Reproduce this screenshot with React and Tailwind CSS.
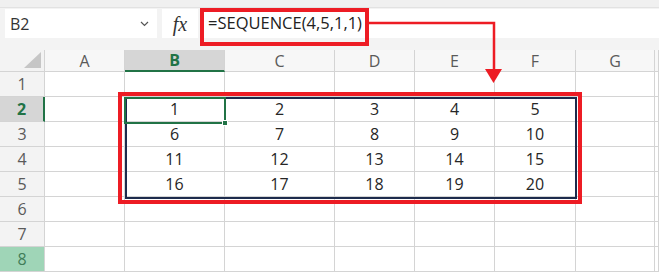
import React from "react";

const cols = [
  { l: "A", w: "w-[80px]" },
  { l: "B", w: "w-[100px]" },
  { l: "C", w: "w-[110px]" },
  { l: "D", w: "w-[80px]" },
  { l: "E", w: "w-[80px]" },
  { l: "F", w: "w-[81px]" },
  { l: "G", w: "w-[79px]" },
  { l: "", w: "w-[4px]" },
];

const data = {
  2: [1, 2, 3, 4, 5],
  3: [6, 7, 8, 9, 10],
  4: [11, 12, 13, 14, 15],
  5: [16, 17, 18, 19, 20],
};

function RowHeader({ n }) {
  if (n === 2)
    return (
      <div className="w-[45px] h-full flex items-center justify-center bg-[#d6d6d6] border-r-2 border-r-[#217346] border-b border-b-[#d4d4d4] font-bold text-[#217346]">
        {n}
      </div>
    );
  if (n === 8)
    return (
      <div className="w-[45px] h-full flex items-center justify-center bg-[#9fd5b7] border-r border-b border-[#d4d4d4] text-[#3f7d58]">
        {n}
      </div>
    );
  return (
    <div className="w-[45px] h-full flex items-center justify-center bg-[#f3f3f3] border-r border-b border-[#d4d4d4] text-[#5a5a5a]">
      {n}
    </div>
  );
}

export default function App() {
  const rows = [1, 2, 3, 4, 5, 6, 7, 8];
  return (
    <div
      className="relative w-[659px] h-[274px] overflow-hidden bg-white text-[16px] text-[#222]"
      style={{ fontFamily: '"Open Sans", "Liberation Sans", sans-serif' }}
    >
      {/* ribbon remnant */}
      <div className="h-[8px] bg-[#f0f0f0] border-b border-[#e2e2e2]" />
      {/* formula bar */}
      <div className="h-[42px] bg-[#f3f3f3] flex items-start pt-[1px]">
        <div className="ml-[5px] w-[152px] h-[29px] bg-white flex items-center justify-between pl-[5px] pr-[8px]">
          <span className="text-[#333]">B2</span>
          <svg width="9" height="6" viewBox="0 0 9 6">
            <path d="M1 1 L4.5 4.5 L8 1" fill="none" stroke="#555" strokeWidth="1.2" />
          </svg>
        </div>
        <div className="ml-[5px] w-[36px] h-[29px] bg-white flex items-center justify-center">
          <span
            className="italic text-[20px] text-[#333]"
            style={{ fontFamily: '"Liberation Serif", serif' }}
          >
            fx
          </span>
        </div>
        <div className="ml-[2px] flex-1 h-[29px] bg-white flex items-center pl-[8px]">
          <span className="text-[16.5px] text-[#222]">=SEQUENCE(4,5,1,1)</span>
        </div>
      </div>
      {/* grid */}
      <div className="flex flex-col">
        <div className="flex h-[22px]">
          <div className="w-[45px] h-full bg-[#f3f3f3] border-r border-b border-[#d4d4d4] flex items-end justify-end pr-[3px] pb-[3px]">
            <svg width="17" height="16" viewBox="0 0 17 16">
              <polygon points="17,0 17,16 0,16" fill="#c6c6c6" />
            </svg>
          </div>
          {cols.map((c) =>
            c.l === "B" ? (
              <div
                key={c.l}
                className={`${c.w} h-full flex items-center justify-center bg-[#d6d6d6] border-b-2 border-b-[#217346] border-r border-r-[#d4d4d4] font-bold text-[#217346]`}
              >
                {c.l}
              </div>
            ) : (
              <div
                key={c.l + "x"}
                className={`${c.w} h-full flex items-center justify-center bg-[#f7f7f7] border-r border-b border-[#d4d4d4] text-[#5a5a5a]`}
              >
                {c.l}
              </div>
            )
          )}
        </div>
        {rows.map((r) => (
          <div key={r} className="flex h-[25px]">
            <RowHeader n={r} />
            {cols.map((c, i) => (
              <div
                key={i}
                className={`${c.w} h-full flex items-center justify-center border-r border-b border-[#d4d4d4] text-[#262626]`}
              >
                {data[r] && i >= 1 && i <= 5 ? data[r][i - 1] : ""}
              </div>
            ))}
          </div>
        ))}
      </div>

      {/* range outline */}
      <div className="absolute left-[125px] top-[97px] w-[452px] h-[102px] border-2 border-[#1d2b4c] pointer-events-none" />
      {/* selected cell */}
      <div className="absolute left-[124px] top-[97px] w-[102px] h-[27px] border-2 border-[#217346] pointer-events-none" />
      <div className="absolute left-[222px] top-[120px] w-[6px] h-[6px] bg-[#217346] border border-white" />

      {/* annotations */}
      <div className="absolute left-[200px] top-[8px] w-[169px] h-[38px] border-4 border-[#ed1c24] pointer-events-none" />
      <div className="absolute left-[118px] top-[92px] w-[464px] h-[112px] border-4 border-[#ed1c24] pointer-events-none" />
      <svg className="absolute left-0 top-0 pointer-events-none" width="659" height="274">
        <polyline points="368,23 494,23 494,71" fill="none" stroke="#ed1c24" strokeWidth="2.5" />
        <polygon points="485,69 502,69 493.5,83" fill="#ed1c24" />
      </svg>
    </div>
  );
}
